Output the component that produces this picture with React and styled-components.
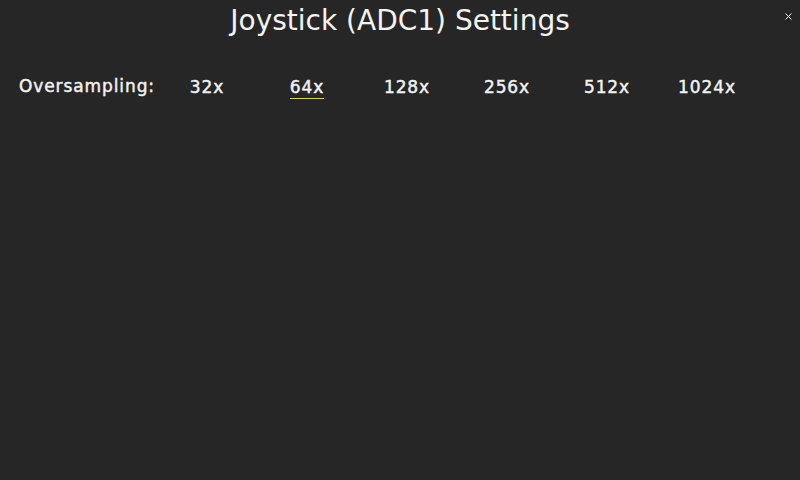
import React, { useState } from "react";
import styled, { createGlobalStyle } from "styled-components";

const Global = createGlobalStyle`
  html, body { margin: 0; padding: 0; background: #262626; }
  body { font-family: "DejaVu Sans", "Liberation Sans", sans-serif; }
`;

const Screen = styled.div`
  position: relative;
  width: 800px;
  height: 480px;
  background: #262626;
  color: #f2f2f2;
  overflow: hidden;
`;

const Header = styled.header`
  display: flex;
  justify-content: center;
  align-items: flex-start;
  height: 70px;
`;

const Title = styled.h1`
  margin: 0;
  padding-top: 3px;
  font-size: 28px;
  font-weight: normal;
  line-height: 36px;
  color: #f4f4f4;
`;

const CloseButton = styled.button`
  position: absolute;
  top: 12px;
  right: 7px;
  width: 9px;
  height: 9px;
  padding: 0;
  border: none;
  background: transparent;
  display: flex;
  align-items: center;
  justify-content: center;
  cursor: pointer;
`;

const Row = styled.div`
  display: flex;
  align-items: center;
  padding-left: 19px;
  height: 32px;
`;

const Label = styled.span`
  width: 138px;
  font-size: 17px;
  letter-spacing: 0.9px;
  -webkit-text-stroke: 0.45px #f2f2f2;
  white-space: nowrap;
`;

const Options = styled.div`
  display: grid;
  grid-template-columns: repeat(6, 100px);
`;

const Option = styled.button`
  display: flex;
  justify-content: center;
  background: transparent;
  border: none;
  padding: 0;
  font-family: inherit;
  color: #f2f2f2;
  font-size: 17px;
  letter-spacing: 0.9px;
  -webkit-text-stroke: 0.45px #f2f2f2;
  cursor: pointer;
`;

const OptionText = styled.span`
  display: block;
  padding-top: 4px;
  padding-bottom: 1px;
  border-bottom: 1px solid ${(p) => (p.$active ? "#e6e000" : "transparent")};
`;

const values = ["32x", "64x", "128x", "256x", "512x", "1024x"];

export default function App() {
  const [sel, setSel] = useState(1);
  return (
    <>
      <Global />
      <Screen>
        <Header>
          <Title>Joystick (ADC1) Settings</Title>
        </Header>
        <CloseButton aria-label="Close">
          <svg width="7" height="7" viewBox="0 0 7 7">
            <path d="M0.5 0.5 L6.5 6.5 M6.5 0.5 L0.5 6.5" stroke="#f2f2f2" strokeWidth="1" />
          </svg>
        </CloseButton>
        <Row>
          <Label>Oversampling:</Label>
          <Options>
            {values.map((v, i) => (
              <Option key={v} onClick={() => setSel(i)}>
                <OptionText $active={sel === i}>{v}</OptionText>
              </Option>
            ))}
          </Options>
        </Row>
      </Screen>
    </>
  );
}
